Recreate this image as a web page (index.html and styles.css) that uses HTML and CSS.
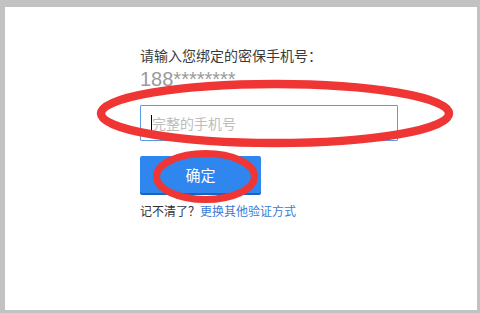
FILE: index.html
```html
<!DOCTYPE html>
<html lang="zh-CN">
<head>
<meta charset="utf-8">
<title>验证手机号</title>
<link rel="stylesheet" href="styles.css">
</head>
<body>
<div class="panel">
  <div class="form">
    <p class="label">请输入您绑定的密保手机号：</p>
    <p class="phone">188********</p>
    <div class="field"><span class="caret"></span><input class="input" type="text" placeholder="完整的手机号"></div>
    <button class="btn" type="button">确定</button>
    <p class="tip">记不清了？<a class="link" href="#">更换其他验证方式</a></p>
  </div>
  <svg class="marks" width="480" height="313" viewBox="0 0 480 313">
    <ellipse cx="275" cy="113.5" rx="174" ry="29.5" fill="none" stroke="#f03535" stroke-width="8.5"/>
    <ellipse cx="205.5" cy="176.5" rx="49" ry="23" fill="none" stroke="#f03535" stroke-width="7"/>
  </svg>
</div>
</body>
</html>
```
FILE: styles.css
```css
html, body {
  margin: 0;
  padding: 0;
  height: 100%;
}
body {
  background: #c2c2c2;
  font-family: "Noto Sans CJK SC", "Liberation Sans", sans-serif;
  padding: 7px 3px 3px 5px;
  box-sizing: border-box;
}
.panel {
  background: #fff;
  height: 100%;
  box-sizing: border-box;
  padding: 38px 0 0 135px;
}
.form {
  display: flex;
  flex-direction: column;
  align-items: flex-start;
}
.label {
  margin: 0;
  font-size: 14px;
  line-height: 20px;
  color: #3a3a3a;
}
.phone {
  margin: 3px 0 0;
  font-family: "Liberation Sans", "Noto Sans CJK SC", sans-serif;
  font-size: 20px;
  line-height: 23px;
  color: #9a9a9a;
}
.field {
  position: relative;
  margin-top: 14px;
}
.caret {
  position: absolute;
  left: 11px;
  top: 10px;
  width: 1px;
  height: 17px;
  background: #000;
}
.input {
  display: block;
  width: 258px;
  height: 36px;
  box-sizing: border-box;
  border: 1px solid #5a9ae6;
  border-radius: 1px;
  padding: 0 11px;
  font-family: "Noto Sans CJK SC", sans-serif;
  font-size: 14px;
  color: #333;
  outline: none;
}
.input::placeholder {
  color: #bdbdbd;
}
.btn {
  margin-top: 15px;
  width: 121px;
  height: 37px;
  border: none;
  border-radius: 2px;
  background: #2f86ee;
  box-shadow: 0 2px 0 #1c63be;
  color: #fff;
  font-family: "Noto Sans CJK SC", sans-serif;
  font-size: 15px;
  line-height: 37px;
  padding: 0;
}
.tip {
  margin: 10px 0 0;
  font-size: 12px;
  line-height: 16px;
  color: #333;
}
.link {
  color: #3a7bd6;
  text-decoration: none;
}
.marks {
  position: absolute;
  left: 0;
  top: 0;
  pointer-events: none;
}
```
